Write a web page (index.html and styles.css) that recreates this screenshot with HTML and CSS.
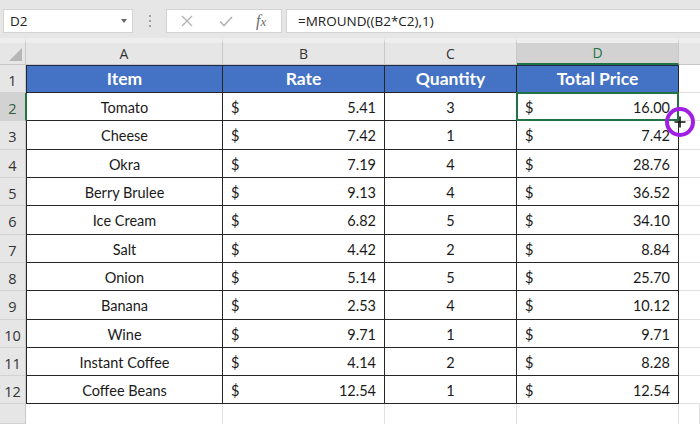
FILE: index.html
```html
<!DOCTYPE html>
<html>
<head>
<meta charset="utf-8">
<link rel="stylesheet" href="styles.css">
</head>
<body>
<div class="app">
  <div class="toolbar">
    <div class="namebox"><span class="nb-text">D2</span><span class="caret"></span></div>
    <div class="grip"><i></i><i></i><i></i></div>
    <div class="fxbtns">
      <svg class="ic" width="14" height="14" viewBox="0 0 14 14"><path d="M2 2 L12 12 M12 2 L2 12" stroke="#b3b3b3" stroke-width="1.3" fill="none"/></svg>
      <svg class="ic" width="16" height="14" viewBox="0 0 16 14"><path d="M2 7.5 L6 11.5 L14 3" stroke="#b3b3b3" stroke-width="1.6" fill="none"/></svg>
      <span class="fx">f<span class="fxx">x</span></span>
    </div>
    <div class="formula">=MROUND((B2*C2),1)</div>
  </div>
  <div class="sheet">
    <div class="corner"><div class="tri"></div></div>
    <div class="ch">A</div><div class="ch">B</div><div class="ch">C</div><div class="ch chsel">D</div><div class="ch che"></div>

    <div class="rh">1</div><div class="c a hd">Item</div><div class="c hd">Rate</div><div class="c hd">Quantity</div><div class="c hd">Total Price</div><div class="e"></div>

    <div class="rh rhsel">2</div><div class="c a asel t">Tomato</div><div class="c cur"><span>$</span><span>5.41</span></div><div class="c t">3</div><div class="c cur sel"><span>$</span><span>16.00</span></div><div class="e"></div>
    <div class="rh">3</div><div class="c a t">Cheese</div><div class="c cur"><span>$</span><span>7.42</span></div><div class="c t">1</div><div class="c cur"><span>$</span><span>7.42</span></div><div class="e"></div>
    <div class="rh">4</div><div class="c a t">Okra</div><div class="c cur"><span>$</span><span>7.19</span></div><div class="c t">4</div><div class="c cur"><span>$</span><span>28.76</span></div><div class="e"></div>
    <div class="rh">5</div><div class="c a t">Berry Brulee</div><div class="c cur"><span>$</span><span>9.13</span></div><div class="c t">4</div><div class="c cur"><span>$</span><span>36.52</span></div><div class="e"></div>
    <div class="rh">6</div><div class="c a t">Ice Cream</div><div class="c cur"><span>$</span><span>6.82</span></div><div class="c t">5</div><div class="c cur"><span>$</span><span>34.10</span></div><div class="e"></div>
    <div class="rh">7</div><div class="c a t">Salt</div><div class="c cur"><span>$</span><span>4.42</span></div><div class="c t">2</div><div class="c cur"><span>$</span><span>8.84</span></div><div class="e"></div>
    <div class="rh">8</div><div class="c a t">Onion</div><div class="c cur"><span>$</span><span>5.14</span></div><div class="c t">5</div><div class="c cur"><span>$</span><span>25.70</span></div><div class="e"></div>
    <div class="rh">9</div><div class="c a t">Banana</div><div class="c cur"><span>$</span><span>2.53</span></div><div class="c t">4</div><div class="c cur"><span>$</span><span>10.12</span></div><div class="e"></div>
    <div class="rh">10</div><div class="c a t">Wine</div><div class="c cur"><span>$</span><span>9.71</span></div><div class="c t">1</div><div class="c cur"><span>$</span><span>9.71</span></div><div class="e"></div>
    <div class="rh">11</div><div class="c a t">Instant Coffee</div><div class="c cur"><span>$</span><span>4.14</span></div><div class="c t">2</div><div class="c cur"><span>$</span><span>8.28</span></div><div class="e"></div>
    <div class="rh">12</div><div class="c a t">Coffee Beans</div><div class="c cur"><span>$</span><span>12.54</span></div><div class="c t">1</div><div class="c cur"><span>$</span><span>12.54</span></div><div class="e"></div>

    <div class="rh"></div><div class="b"></div><div class="b"></div><div class="b"></div><div class="b"></div><div class="b"></div>
  </div>
  <div class="cursor">
    <svg width="14" height="14" viewBox="0 0 14 14"><path d="M7 1.5 V12.5 M1.5 7 H12.5" stroke="#111" stroke-width="1.6" fill="none"/></svg>
  </div>
</div>
</body>
</html>
```

FILE: styles.css
```css
html, body {
  margin: 0;
  padding: 0;
  background: #ffffff;
}

.app {
  position: relative;
  width: 700px;
  height: 424px;
  overflow: hidden;
  background: #ffffff;
  font-family: Lato, "Liberation Sans", sans-serif;
}

/* ---------- toolbar ---------- */
.toolbar {
  height: 38px;
  box-sizing: border-box;
  background: #e6e6e6;
  display: flex;
  align-items: flex-start;
  padding-top: 9px;
}

.namebox {
  margin-left: 3px;
  width: 130px;
  height: 24px;
  box-sizing: border-box;
  background: #ffffff;
  border: 1px solid #d3d3d3;
  display: flex;
  align-items: center;
  justify-content: space-between;
  padding: 0 5px 0 6px;
  font-family: "Open Sans", "Noto Sans", sans-serif;
  font-size: 13.5px;
  color: #222;
}

.caret {
  width: 0;
  height: 0;
  border-left: 3.5px solid transparent;
  border-right: 3.5px solid transparent;
  border-top: 4px solid #666;
}

.grip {
  width: 33px;
  height: 24px;
  display: flex;
  flex-direction: column;
  align-items: center;
  justify-content: center;
  gap: 3px;
}

.grip i {
  display: block;
  width: 2px;
  height: 2px;
  background: #a0a0a0;
}

.fxbtns {
  width: 116px;
  height: 24px;
  box-sizing: border-box;
  background: #ffffff;
  border: 1px solid #d3d3d3;
  display: flex;
  align-items: center;
  padding-left: 13px;
  gap: 0;
}

.fxbtns .ic:nth-child(1) { margin-right: 24px; }
.fxbtns .ic:nth-child(2) { margin-right: 22px; }

.fx {
  font-family: "Liberation Serif", "DejaVu Serif", serif;
  font-style: italic;
  font-size: 16px;
  color: #6a6a6a;
  line-height: 1;
}

.fxx {
  font-size: 13px;
}

.formula {
  flex: 1;
  margin-left: 4px;
  height: 24px;
  box-sizing: border-box;
  background: #ffffff;
  border: 1px solid #d3d3d3;
  border-right: none;
  display: flex;
  align-items: center;
  padding-left: 11px;
  font-family: "Open Sans", "Noto Sans", sans-serif;
  font-size: 13.5px;
  color: #222;
}

/* ---------- sheet ---------- */
.sheet {
  display: grid;
  grid-template-columns: 26px 197px 162px 132px 162px 1fr;
  grid-template-rows: 27px 28px 28px 29px 28px 28px 29px 28px 28px 29px 28px 28px 28px 1fr;
  height: 386px;
}

.sheet > div {
  box-sizing: border-box;
}

.corner {
  background: #e6e6e6;
  border-top: 5px solid #eeeeee;
  border-right: 1px solid #c8c8c8;
  border-bottom: 1px solid #c8c8c8;
  display: flex;
  justify-content: flex-end;
  align-items: flex-end;
  padding: 0 3px 3px 0;
}

.tri {
  width: 13px;
  height: 13px;
  background: #b6b6b6;
  clip-path: polygon(100% 0, 100% 100%, 0 100%);
}

.ch {
  background: #e6e6e6;
  border-top: 5px solid #eeeeee;
  border-right: 1px solid #c8c8c8;
  border-bottom: 1px solid #c8c8c8;
  display: flex;
  align-items: center;
  justify-content: center;
  font-family: "Open Sans", "Noto Sans", sans-serif;
  font-size: 14px;
  color: #333;
  padding-bottom: 1px;
}

.chsel {
  background: #d2d2d2;
  color: #217346;
  border-bottom: 2px solid #217346;
}

.che {
  border-right: none;
}

.rh {
  background: #e6e6e6;
  border-right: 1px solid #c8c8c8;
  border-bottom: 1px solid #d2d2d2;
  display: flex;
  align-items: center;
  justify-content: center;
  font-family: "Open Sans", "Noto Sans", sans-serif;
  font-size: 14.5px;
  color: #333;
  padding-top: 3px;
}

.rhsel {
  background: #d2d2d2;
  color: #2f5e43;
  border-right: 1px solid #217346;
}

.c {
  background: #ffffff;
  border-right: 1px solid #262626;
  border-bottom: 1px solid #262626;
  font-size: 14.5px;
  color: #1a1a1a;
}

.a {
  border-left: 1px solid #262626;
}

.asel {
  border-left-color: #217346;
}

.hd {
  background: #4472c4;
  color: #ffffff;
  font-weight: 700;
  font-size: 17.5px;
  display: flex;
  align-items: center;
  justify-content: center;
  box-shadow: inset 0 1px 0 #1f2a44;
}

.t {
  display: flex;
  align-items: center;
  justify-content: center;
  padding-top: 1px;
}

.cur {
  display: flex;
  align-items: center;
  justify-content: space-between;
  padding: 1px 8px 0 8px;
}

.sel {
  position: relative;
}

.sel::after {
  content: "";
  position: absolute;
  left: -1px;
  top: -1px;
  right: -1px;
  bottom: -1px;
  border: 2px solid #217346;
}

.e {
  background: #ffffff;
  border-bottom: 1px solid #e1e1e1;
}

.b {
  background: #ffffff;
  border-right: 1px solid #e1e1e1;
}

/* ---------- cursor ---------- */
.cursor {
  position: absolute;
  left: 665px;
  top: 107px;
  width: 30px;
  height: 30px;
  box-sizing: border-box;
  border: 4px solid #a11fe3;
  border-radius: 50%;
  display: flex;
  align-items: center;
  justify-content: center;
}
```
